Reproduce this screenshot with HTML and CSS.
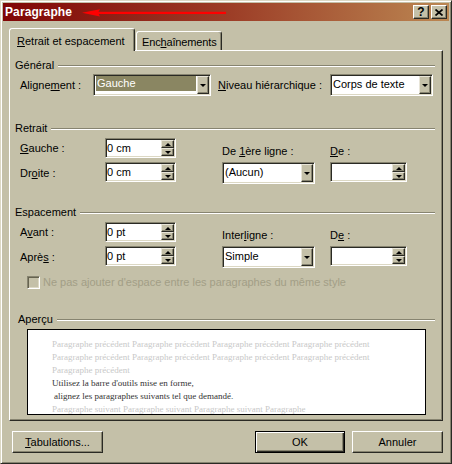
FILE: index.html
```html
<!DOCTYPE html>
<html lang="fr">
<head>
<meta charset="utf-8">
<title>Paragraphe</title>
<link rel="stylesheet" href="styles.css">
</head>
<body>
<div class="window">
  <div class="titlebar">
    <span class="title">Paragraphe</span>
    <div class="caption">
      <span class="cbtn help">?</span>
      <span class="cbtn close"><svg width="8" height="7" viewBox="0 0 8 7"><path d="M0.5 0.5L7.5 6.5M7.5 0.5L0.5 6.5" stroke="#000" stroke-width="1.7"/></svg></span>
    </div>
    <svg class="arrow" width="150" height="13" viewBox="0 0 150 13">
      <path d="M1 6.8L19 3.2L17 6.8L19 10.6Z" fill="#ff0000"/>
      <rect x="16" y="5.8" width="129" height="2.2" fill="#ff0000"/>
    </svg>
  </div>

  <div class="tabs">
    <div class="tab active"><u>R</u>etrait et espacement</div>
    <div class="tab other">Enc<u>h</u>aînements</div>
  </div>

  <div class="panel">
    <div class="ghead"><span>Général</span><i class="etch"></i></div>
    <div class="row-align">
      <span class="lbl-align">Aligne<u>m</u>ent :</span>
      <div class="combo w-align">
        <span class="txt"><span class="sel">Gauche</span></span>
        <span class="drop"><i class="down"></i></span>
      </div>
      <span class="lbl-niv"><u>N</u>iveau hiérarchique :</span>
      <div class="combo w-niv">
        <span class="txt">Corps de texte</span>
        <span class="drop"><i class="down"></i></span>
      </div>
    </div>

    <div class="ghead gap-retrait"><span>Retrait</span><i class="etch"></i></div>
    <div class="grid">
      <span class="r1 c1 lbl"><u>G</u>auche :</span>
      <div class="r1 c2 spin"><span class="txt">0 cm</span><span class="btns"><span class="sbtn"><i class="up"></i></span><span class="sbtn"><i class="down"></i></span></span></div>
      <span class="r2 c1 lbl">Dr<u>o</u>ite :</span>
      <div class="r2 c2 spin"><span class="txt">0 cm</span><span class="btns"><span class="sbtn"><i class="up"></i></span><span class="sbtn"><i class="down"></i></span></span></div>
      <span class="r1 c4 lbl-top">De <u>1</u>ère ligne :</span>
      <div class="r2 c4 combo"><span class="txt">(Aucun)</span><span class="drop"><i class="down"></i></span></div>
      <span class="r1 c6 lbl-top"><u>D</u>e :</span>
      <div class="r2 c6 spin"><span class="txt"></span><span class="btns"><span class="sbtn"><i class="up"></i></span><span class="sbtn"><i class="down"></i></span></span></div>
    </div>

    <div class="ghead gap-esp"><span>Espacement</span><i class="etch"></i></div>
    <div class="grid">
      <span class="r1 c1 lbl">A<u>v</u>ant :</span>
      <div class="r1 c2 spin"><span class="txt">0 pt</span><span class="btns"><span class="sbtn"><i class="up"></i></span><span class="sbtn"><i class="down"></i></span></span></div>
      <span class="r2 c1 lbl">Aprè<u>s</u> :</span>
      <div class="r2 c2 spin"><span class="txt">0 pt</span><span class="btns"><span class="sbtn"><i class="up"></i></span><span class="sbtn"><i class="down"></i></span></span></div>
      <span class="r1 c4 lbl-top">Inter<u>l</u>igne :</span>
      <div class="r2 c4 combo"><span class="txt">Simple</span><span class="drop"><i class="down"></i></span></div>
      <span class="r1 c6 lbl-top">D<u>e</u> :</span>
      <div class="r2 c6 spin"><span class="txt"></span><span class="btns"><span class="sbtn"><i class="up"></i></span><span class="sbtn"><i class="down"></i></span></span></div>
    </div>

    <div class="check-row">
      <span class="checkbox"></span>
      <span class="check-lbl">Ne pas ajouter d'espace entre les paragraphes du même style</span>
    </div>

    <div class="ghead gap-apercu"><span>Aperçu</span><i class="etch"></i></div>
    <div class="preview">
      <div>Paragraphe précédent Paragraphe précédent Paragraphe précédent Paragraphe précédent</div>
      <div>Paragraphe précédent Paragraphe précédent Paragraphe précédent Paragraphe précédent</div>
      <div>Paragraphe précédent</div>
      <div class="cur">Utilisez la barre d'outils mise en forme,</div>
      <div class="cur ind">alignez les paragraphes suivants tel que demandé.</div>
      <div>Paragraphe suivant Paragraphe suivant Paragraphe suivant Paragraphe</div>
    </div>
  </div>

  <div class="actions">
    <span class="btn"><span><u>T</u>abulations...</span></span>
    <span class="spacer"></span>
    <span class="btn ok">OK</span>
    <span class="btn cancel">Annuler</span>
  </div>
</div>
</body>
</html>
```

FILE: styles.css
```css
* { box-sizing: border-box; }

html, body {
  margin: 0;
  padding: 0;
  background: #c4c0a8;
}

body {
  font-family: "Liberation Sans", Arial, sans-serif;
  font-size: 11px;
  line-height: 13px;
  color: #000;
}

u { text-decoration: underline; text-underline-offset: 1px; }

.window {
  width: 452px;
  height: 464px;
  padding: 2px;
  background: #c4c0a8;
  border: 1px solid;
  border-color: #dcd8c4 #2a2a24 #2a2a24 #dcd8c4;
  box-shadow: inset 1px 1px #ffffff, inset -1px -1px #878470;
}

/* Title bar */
.titlebar {
  position: relative;
  height: 18px;
  display: flex;
  align-items: center;
  justify-content: space-between;
  padding: 0 2px;
  background: linear-gradient(90deg, #800606 0%, #9c3c26 50%, #bb8752 100%);
}
.title {
  color: #fff;
  font-weight: bold;
  font-size: 12px;
  letter-spacing: 0.1px;
}
.caption { display: flex; gap: 2px; }
.cbtn {
  width: 16px;
  height: 14px;
  display: flex;
  align-items: center;
  justify-content: center;
  background: #c4c0a8;
  border: 1px solid;
  border-color: #fff #2a2a24 #2a2a24 #fff;
  box-shadow: inset -1px -1px #878470;
  font-weight: bold;
  font-size: 12px;
  line-height: 12px;
}
.arrow {
  position: absolute;
  left: 78px;
  top: 3px;
}

/* Tabs */
.tabs {
  display: flex;
  align-items: flex-end;
  height: 30px;
  padding-left: 6px;
  position: relative;
  z-index: 1;
}
.tab {
  background: #c4c0a8;
  border: 1px solid;
  border-bottom: none;
  border-color: #fff #2a2a24 transparent #fff;
  box-shadow: inset -1px 0 #878470;
  border-radius: 3px 3px 0 0;
  white-space: nowrap;
  overflow: hidden;
}
.tab.active {
  width: 126px;
  height: 23px;
  padding: 6px 0 0 7px;
}
.tab.other {
  width: 86px;
  height: 19px;
  margin: 0 0 1px 1px;
  padding: 4px 0 0 5px;
  letter-spacing: -0.15px;
}

/* Panel */
.panel {
  margin: -1px 0 0 6px;
  width: 434px;
  height: 371px;
  padding: 8px 7px 0 5px;
  border: 1px solid;
  border-color: #fff #2a2a24 #2a2a24 #fff;
  box-shadow: inset -1px -1px #878470;
}

.ghead {
  display: flex;
  align-items: flex-start;
  height: 13px;
  white-space: nowrap;
}
.etch {
  flex: 1;
  margin: 6px 0 0 4px;
  border-top: 1px solid #878470;
  border-bottom: 1px solid #fff;
}
.gap-retrait { margin-top: 26px; }
.gap-esp { margin-top: 22px; }
.gap-apercu { margin-top: 24px; padding-left: 3px; }

.row-align {
  display: flex;
  align-items: center;
  height: 22px;
  margin-top: 2px;
  padding-left: 5px;
  white-space: nowrap;
}
.lbl-align { width: 73px; }
.lbl-niv { width: 112px; margin-left: 7px; }
.w-align { width: 118px; }
.w-niv { width: 103px; }

/* Combo box */
.combo {
  display: flex;
  height: 22px;
  padding: 1px;
  border: 1px solid;
  border-color: #878470 #fff #fff #878470;
  box-shadow: inset 1px 1px #2a2a24, inset -1px -1px #dcd8c4;
  background: #fff;
}
.combo .txt {
  flex: 1;
  line-height: 16px;
  padding-left: 1px;
  white-space: nowrap;
  overflow: hidden;
}
.combo .sel {
  display: block;
  height: 15px;
  line-height: 15px;
  margin: 0 1px 0 0;
  padding-left: 1px;
  background: #8a8662;
  color: #fff;
}
.drop {
  width: 12px;
  display: flex;
  align-items: center;
  justify-content: center;
  background: #c4c0a8;
  border: 1px solid;
  border-color: #e8e5d8 #2a2a24 #2a2a24 #e8e5d8;
  box-shadow: inset -1px -1px #878470;
}
.down, .up {
  display: block;
  width: 0;
  height: 0;
  border-left: 3px solid transparent;
  border-right: 3px solid transparent;
}
.down { border-top: 3px solid #000; }
.up { border-bottom: 3px solid #000; }

/* Grids */
.grid {
  display: grid;
  grid-template-columns: 85px 71px 46px 93px 15px 77px;
  grid-template-rows: 20px 22px;
  row-gap: 4px;
  margin-top: 3px;
  padding-left: 5px;
  white-space: nowrap;
}
.r1 { grid-row: 1; }
.r2 { grid-row: 2; }
.c1 { grid-column: 1; }
.c2 { grid-column: 2; }
.c4 { grid-column: 4; }
.c6 { grid-column: 6; }
.lbl { align-self: center; }
.lbl-top { align-self: end; }

/* Spin box */
.spin {
  display: flex;
  height: 20px;
  align-self: start;
  padding: 1px;
  border: 1px solid;
  border-color: #878470 #fff #fff #878470;
  box-shadow: inset 1px 1px #2a2a24, inset -1px -1px #dcd8c4;
  background: #fff;
}
.spin .txt { flex: 1; line-height: 16px; }
.btns {
  width: 13px;
  display: flex;
  flex-direction: column;
}
.sbtn {
  flex: 1;
  display: flex;
  align-items: center;
  justify-content: center;
  background: #c4c0a8;
  border: 1px solid;
  border-color: #e8e5d8 #2a2a24 #2a2a24 #e8e5d8;
  box-shadow: inset -1px -1px #878470;
}

/* Checkbox */
.check-row {
  display: flex;
  align-items: center;
  height: 13px;
  margin-top: 8px;
  padding-left: 12px;
  white-space: nowrap;
}
.checkbox {
  width: 13px;
  height: 13px;
  border: 1px solid;
  border-color: #878470 #fff #fff #878470;
  box-shadow: inset 1px 1px #66634f, inset -1px -1px #dcd8c4;
  background: #c4c0a8;
}
.check-lbl {
  margin-left: 3px;
  color: #a29e86;
}

/* Preview */
.preview {
  margin: 3px 0 0 12px;
  width: 399px;
  height: 86px;
  padding: 8px 0 0 24px;
  border: 1px solid #000;
  background: #fff;
  overflow: hidden;
  font-family: "Liberation Serif", "Times New Roman", serif;
  font-size: 9px;
  line-height: 13px;
  white-space: nowrap;
  color: #c8c8c8;
}
.preview .cur { color: #333; }
.preview .ind { padding-left: 2px; }

/* Buttons */
.actions {
  display: flex;
  height: 22px;
  margin-top: 10px;
  padding: 0 6px 0 9px;
}
.spacer { flex: 1; }
.btn {
  width: 91px;
  height: 22px;
  display: flex;
  align-items: center;
  justify-content: center;
  background: #c4c0a8;
  border: 1px solid;
  border-color: #fff #2a2a24 #2a2a24 #fff;
  box-shadow: inset -1px -1px #878470;
  white-space: nowrap;
}
.btn.ok {
  width: 90px;
  border-color: #000;
  box-shadow: inset 1px 1px #fff, inset -1px -1px #2a2a24, inset -2px -2px #878470;
}
.btn.cancel { margin-left: 7px; }
```
